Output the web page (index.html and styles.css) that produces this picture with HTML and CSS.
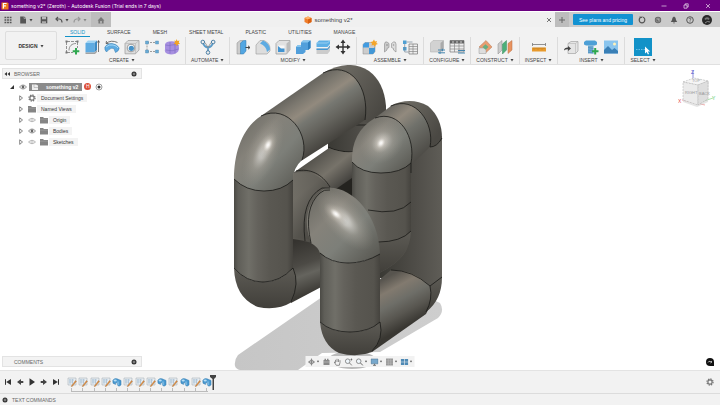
FILE: index.html
```html
<!DOCTYPE html>
<html lang="en">
<head>
    <meta charset="UTF-8">
    <meta name="viewport" content="width=device-width, initial-scale=1.0">
    <title>something v2* (Zeroth) - Autodesk Fusion</title>
    <link rel="stylesheet" href="styles.css">
</head>
<body>

    <!-- shared icons -->
    <svg class="sprite" aria-hidden="true">
        <symbol id="caret" viewBox="0 0 4 4"><path d="M0.5 1h3L2 3.4z" fill="#444"/></symbol>
        <symbol id="eye" viewBox="0 0 8 8"><path d="M0.5 4Q4 0 7.5 4Q4 8 0.5 4z" fill="#fff" stroke="#777" stroke-width="0.8"/><circle cx="4" cy="4" r="1.4" fill="#666"/></symbol>
        <symbol id="eye-off" viewBox="0 0 8 8"><path d="M0.5 4Q4 0.6 7.5 4Q4 7.4 0.5 4z" fill="#fff" stroke="#aaa" stroke-width="0.8"/><circle cx="4" cy="4" r="1.2" fill="none" stroke="#aaa" stroke-width="0.6"/></symbol>
        <symbol id="folder" viewBox="0 0 8 8"><path d="M0 1h3l1 1h4v5.5H0z" fill="#858585"/><path d="M0 3.2h8" stroke="#aaa" stroke-width="0.5"/></symbol>
        <symbol id="twist" viewBox="0 0 6 6"><path d="M1.7 0.8L4.5 3L1.7 5.4z" fill="#fff" stroke="#555" stroke-width="0.7"/></symbol>
        <symbol id="gear" viewBox="0 0 10 10"><circle cx="5" cy="5" r="3.8" fill="none" stroke="#777" stroke-width="1.6" stroke-dasharray="1.7 1.28"/><circle cx="5" cy="5" r="2.6" fill="none" stroke="#777" stroke-width="1.4"/></symbol>
        <symbol id="dot" viewBox="0 0 6 6"><circle cx="3" cy="3" r="2.5" fill="#333"/><path d="M1.7 3h2.6M3 1.7v2.6" stroke="#ddd" stroke-width="0.5"/></symbol>
        <symbol id="sketch" viewBox="0 0 10 10"><path d="M1 1h8v7H1z" fill="#e9edf1" stroke="#a9b2bb" stroke-width="0.6"/><path d="M2 3h5M2 5h4M3 2v5M5.500 2v5" stroke="#9cb9d0" stroke-width="0.6"/><path d="M4.500 8.700L8.500 3.500l1 0.800L5.500 9.300l-1.300 0.400z" fill="#e08a36" stroke="#8d6544" stroke-width="0.3"/></symbol>
        <symbol id="pipe" viewBox="0 0 10 10"><path d="M0.800 3.500Q2 1 5 1.800L9 3.500V8L7 9.200L5.300 8V6L3.500 5.600V7.400L1 6.200z" fill="#4b9bd2" stroke="#2b74ab" stroke-width="0.5"/><ellipse cx="3.200" cy="3.500" rx="1.600" ry="1" fill="#b7ddf4"/><path d="M6 4.500v3.500" stroke="#a5d3ef" stroke-width="0.9"/></symbol>
    </svg>

    <header class="titlebar">
        <svg class="app-icon" viewBox="0 0 8 8"><path d="M0.500 0.500h6l1 1v6h-7z" fill="#f07a1c"/><path d="M2.400 6.500v-5h3.200M2.400 3.800h2.500" stroke="#fff" stroke-width="1.200" fill="none"/></svg>
        <span class="title">something v2* (Zeroth) - Autodesk Fusion (Trial ends in 7 days)</span>
        <div class="window-buttons">
            <button aria-label="Minimize"><svg viewBox="0 0 6 6"><path d="M0.500 3h5"/></svg></button>
            <button aria-label="Restore"><svg viewBox="0 0 6 6"><path d="M1 2h3v3.200H1zM2.200 2V0.800h3v3.200H4"/></svg></button>
            <button aria-label="Close"><svg viewBox="0 0 6 6"><path d="M1 1l4 4M5 1L1 5"/></svg></button>
        </div>
    </header>

    <nav class="filebar">
        <div class="quick">
            <button aria-label="Data panel"><svg viewBox="0 0 8 8"><path d="M0.500 1.500h7M0.500 4h7M0.500 6.500h7" stroke="#555" stroke-width="1.700" stroke-dasharray="1.800 0.800"/></svg></button>
            <button aria-label="File" class="push"><svg viewBox="0 0 8 8"><path d="M1.200 0.500h4L7 2.300v5.200H1.200z" fill="#555"/><path d="M5 0.500v2h2" stroke="#ccc" stroke-width="0.500" fill="none"/></svg><svg class="caret"><use href="#caret"/></svg></button>
            <button aria-label="Save" class="push"><svg viewBox="0 0 8 8"><path d="M0.700 0.700h6.600v6.600H0.700z" fill="#555"/><path d="M2 0.700h4v2.500H2zM2 5h4v2.300H2z" fill="#bbb"/><path d="M2 5.800h4" stroke="#555" stroke-width="0.500"/></svg></button>
            <button aria-label="Undo" class="push"><svg viewBox="0 0 8 8"><path d="M3 1L1 3l2 2M1 3h3.500Q7 3.300 7 6.500" fill="none" stroke="#555" stroke-width="1.200"/></svg><svg class="caret"><use href="#caret"/></svg></button>
            <button aria-label="Redo"><svg viewBox="0 0 8 8"><path d="M5 1l2 2-2 2M7 3H3.500Q1 3.300 1 6.500" fill="none" stroke="#999" stroke-width="1.200"/></svg><svg class="caret faded"><use href="#caret"/></svg></button>
            <button aria-label="Home" class="home"><svg viewBox="0 0 8 8"><path d="M0.500 4.500L4 1l3.500 3.500H6.600V7.500H1.400V4.500z" fill="#777"/><path d="M3.200 7.500V5h1.600v2.500" fill="#bbb"/></svg></button>
        </div>
        <div class="doc-tab">
            <span class="doc-name"><svg viewBox="0 0 8 8"><path d="M0.500 2L4 0.500L7.500 2V6L4 7.700L0.500 6z" fill="#ef7d2a"/><path d="M0.500 2L4 0.500L7.500 2L4 3.500z" fill="#ffb46b"/><path d="M4 3.500L7.500 2V6L4 7.700z" fill="#d96010"/></svg>something v2*</span>
            <button aria-label="Close tab"><svg viewBox="0 0 6 6"><path d="M1 1l4 4M5 1L1 5" stroke="#555" stroke-width="0.800"/></svg></button>
        </div>
        <div class="account">
            <button class="new-tab" aria-label="New tab"><svg viewBox="0 0 8 8"><path d="M4 1v6M1 4h6" stroke="#666" stroke-width="1"/></svg></button>
            <button class="plans">See plans and pricing</button>
            <button aria-label="Extensions"><svg viewBox="0 0 8 8"><circle cx="4" cy="4" r="2.800" fill="none" stroke="#555" stroke-width="1.200"/><path d="M4 0.500L6 4L4.500 4.500" fill="none" stroke="#ccc" stroke-width="0.700"/><path d="M1.500 1l2 0.500" stroke="#555"/></svg></button>
            <button aria-label="Job status"><svg viewBox="0 0 8 8"><circle cx="4" cy="4" r="3.200" fill="#666"/><circle cx="4" cy="4" r="2" fill="none" stroke="#aaa" stroke-width="0.500"/><path d="M4 2.300V4h1.500" stroke="#ddd" stroke-width="0.700" fill="none"/></svg></button>
            <button aria-label="Notifications"><svg viewBox="0 0 8 8"><path d="M4 0.500Q6 1 6 4L7.200 6H0.800L2 4Q2 1 4 0.500zM3 6.500h2L4 7.700z" fill="#555"/></svg></button>
            <button aria-label="Help"><svg viewBox="0 0 8 8"><circle cx="4" cy="4" r="3.300" fill="none" stroke="#555" stroke-width="1"/><path d="M2.900 3.100Q3 2 4 2T5.100 3Q5 3.600 4 4.200V4.800M4 5.400v0.800" fill="none" stroke="#555" stroke-width="0.800"/></svg></button>
            <button aria-label="Profile" class="avatar"><svg viewBox="0 0 10 10"><circle cx="5" cy="5" r="5" fill="#292929"/><path d="M2.500 3.500Q5 1 7.500 3.200L7 5Q5 3.500 3 5z" fill="#777"/><path d="M3 8Q5 5.500 8 7" stroke="#888" fill="none"/></svg></button>
        </div>
    </nav>

    <section class="ribbon">
        <button class="workspace">DESIGN <svg class="caret"><use href="#caret"/></svg></button>
        <div class="tools">
            <div class="tabs">
                <button class="active">SOLID</button>
                <button>SURFACE</button>
                <button>MESH</button>
                <button>SHEET METAL</button>
                <button>PLASTIC</button>
                <button>UTILITIES</button>
                <button>MANAGE</button>
            </div>
            <div class="groups">
                <div class="group">
                    <div class="icons">
                        <button aria-label="Create sketch"><svg viewBox="0 0 16 16"><path d="M3 2.500h10M2.500 3v10M3 13.500h6M13.500 3v6" fill="none" stroke="#777" stroke-width="0.800" stroke-dasharray="3 1"/><path d="M5 11.500C5 7 8 4.500 12 4.500" fill="none" stroke="#777" stroke-width="0.800"/><path d="M1.500 1.500h2v2h-2zM12.500 1.500h2v2h-2zM1.500 12.500h2v2h-2z" fill="#777"/><path d="M12 9v6.500M8.700 12.200h6.600" stroke="#2fa84f" stroke-width="2"/></svg></button>
                        <button aria-label="Extrude"><svg viewBox="0 0 16 16"><path d="M1.500 4L4 1.500h9L10.500 4z" fill="#9fd3f3"/><path d="M1.500 4h9v9.500h-9z" fill="#5dabe2"/><path d="M10.500 4L13 1.500V11l-2.500 2.500z" fill="#3a8bc6"/><path d="M1.500 13.500h9L13 11v2l-2 2H1.500z" fill="#a3a3a3"/><path d="M14.500 13V2M13.500 3.500l1-2 1 2" stroke="#444" stroke-width="0.700" fill="none"/></svg></button>
                        <button aria-label="Revolve"><svg viewBox="0 0 16 16"><path d="M0.800 8.500Q3 4 8 4.500T15.200 9Q15 12 11.500 13.500L9.800 9.500Q7.500 8.500 5 10.500L2.500 13Q0.500 11 0.800 8.500z" fill="#5dabe2" stroke="#3077aa" stroke-width="0.500"/><path d="M2 8Q5 5.200 9 6T14 9" stroke="#a8d8f4" fill="none"/><path d="M2 4.500Q7 0.500 13.500 3.500M2 4.500l0.500-2.500M2 4.500h2.500" stroke="#555" stroke-width="0.800" fill="none"/></svg></button>
                        <button aria-label="Hole"><svg viewBox="0 0 16 16"><path d="M1 4.500L4 1.500h11V11l-3.500 3.800H1z" fill="#ddd" stroke="#999" stroke-width="0.700"/><path d="M1 4.500h10.500v10.300M11.500 4.500L15 1.500" fill="none" stroke="#aaa" stroke-width="0.500"/><circle cx="7" cy="9" r="3.800" fill="#fff" stroke="#777" stroke-width="0.700"/><circle cx="7.300" cy="9.300" r="2.600" fill="#4591c7"/></svg></button>
                        <button aria-label="Pattern"><svg viewBox="0 0 16 16"><path d="M3 3.500h10M3 3.500v9h10" stroke="#777" stroke-width="0.700" stroke-dasharray="2 1" fill="none"/><path d="M1.500 2h3v3h-3zM11.500 2h3v3h-3zM1.500 11h3v3h-3zM11.500 11h3v3h-3z" fill="#69acd7" stroke="#4e85aa" stroke-width="0.400"/></svg></button>
                        <button aria-label="Create form"><svg viewBox="0 0 16 16"><path d="M1 6Q1 3 5 2.500T12 3Q15 5 15 9T11.500 14.500T4 15T1 10z" fill="#a68fe0"/><path d="M1.500 6Q5 7 8 6T14.500 6.500M2 11Q8 13 14.500 10M6 3V14.500M11 4V14.500" stroke="#7c69c0" stroke-width="0.600" fill="none"/><path d="M12.500 0l1 2 2-0.500-0.800 2 1.300 1.500-2.200 0.300-1 2-1-2-2.200-0.300 1.500-1.500L10.300 1.500l1.700 0.500z" fill="#f2a323"/></svg></button>
                    </div>
                    <button class="label">CREATE <svg class="caret"><use href="#caret"/></svg></button>
                </div>
                <div class="group">
                    <div class="icons">
                        <button aria-label="Automate"><svg viewBox="0 0 16 16"><path d="M3 3.500Q4 8 8 8.500Q12 8 13 3.500M8 8.500v5" fill="none" stroke="#5c9cc8" stroke-width="1.800"/><path d="M5 3.500l3 5 3-5" stroke="#888" stroke-width="0.800" fill="none"/><circle cx="2.800" cy="3" r="1.800" fill="#eee" stroke="#4c7fa4"/><circle cx="13.200" cy="3" r="1.800" fill="#eee" stroke="#4c7fa4"/><circle cx="8" cy="13.500" r="1.800" fill="#eee" stroke="#4c7fa4"/></svg></button>
                    </div>
                    <button class="label">AUTOMATE <svg class="caret"><use href="#caret"/></svg></button>
                </div>
                <div class="group">
                    <div class="icons">
                        <button aria-label="Press pull"><svg viewBox="0 0 16 16"><path d="M2 4l3-2.500h3v11L5.500 15H2z" fill="#ccc" stroke="#888" stroke-width="0.500"/><path d="M5.500 4L8.500 1.500H11V12l-2.500 3h-3z" fill="#52a6e2" stroke="#2d77ac" stroke-width="0.500"/><path d="M10.500 8.500h4M13 6.800l2 1.700-2 1.700" stroke="#333" stroke-width="0.900" fill="none"/></svg></button>
                        <button aria-label="Fillet"><svg viewBox="0 0 16 16"><path d="M1 15V6L5 1.500h4Q15 4 15 10v2L12 15z" fill="#ddd" stroke="#999" stroke-width="0.600"/><path d="M5 4.500L8 1.500Q14.500 4 15 10.500L12 13Q11.500 7 5 4.500z" fill="#5dabe2"/></svg></button>
                        <button aria-label="Shell"><svg viewBox="0 0 16 16"><path d="M1 4.500L4 1.500h11V11l-3.500 4H1z" fill="#e1e1e1" stroke="#999" stroke-width="0.700"/><path d="M11.500 4.500L15 1.500V11l-3.500 4z" fill="#bbb"/><path d="M3 6.500h6.500v6.500H3z" fill="#f7f7f7"/><path d="M3 13V7l3 2.500h3.500V13z" fill="#4394d1"/></svg></button>
                        <button aria-label="Combine"><svg viewBox="0 0 16 16"><path d="M6 3.500L8 1.500h7.500v7.500L13 11h-2.500v2L8 15H1V8L3 6h3z" fill="#519fdb"/><path d="M6 3.500L8 1.500h7.500L13 3.500zM1 8l2-2h3v2z" fill="#86c5ee"/><path d="M13 3.500l2.500-2v7.500L13 11z" fill="#2f7fbd"/></svg></button>
                        <button aria-label="Split"><svg viewBox="0 0 16 16"><path d="M1.500 4L4 1.500h11V5l-2.500 3h-11z" fill="#5eb0e6"/><path d="M1.500 4h11L15 1.500" stroke="#b5def6" stroke-width="0.700" fill="none"/><path d="M1.500 9.500h11l2.500-3v5.500L12.500 15h-11z" fill="#ccc"/><path d="M1.500 9.500h11l2.500-3v1.500l-2.500 3h-11z" fill="#4695cf"/></svg></button>
                        <button aria-label="Move"><svg viewBox="0 0 16 16"><path d="M8 2v12M2 8h12" stroke="#333" stroke-width="1.400"/><path d="M8 0.500l2.500 3.500h-5zM8 15.500L5.500 12h5zM0.500 8L4 5.500v5zM15.500 8L12 10.500v-5z" fill="#333"/></svg></button>
                    </div>
                    <button class="label">MODIFY <svg class="caret"><use href="#caret"/></svg></button>
                </div>
                <div class="group">
                    <div class="icons">
                        <button aria-label="New component"><svg viewBox="0 0 16 16"><path d="M1 5.500L3 3.500h10v9L11 15H1z" fill="#ccc" stroke="#888" stroke-width="0.500"/><path d="M1 5.500L3 3.500h4v5H1z" fill="#429be0"/><path d="M7 9h5l1-1v4.500L11 15H7z" fill="#4297d6"/><path d="M12 0.500l1 2 2-0.500-0.700 2L16 5l-2.200 0.800L13 8l-1.500-2-2 0.500L10 4.500 8.500 3l2.200-0.500z" fill="#f4a52a"/></svg></button>
                        <button aria-label="Joint"><svg viewBox="0 0 16 16"><path d="M2.500 13V5Q3 2 5 3L7 4.500v4L5 9.500V11z" fill="#ccc" stroke="#888" stroke-width="0.600"/><path d="M14 13V5Q13.500 2 11.500 3L9.500 4.500v4l2 1V11z" fill="#ddd" stroke="#888" stroke-width="0.600"/><circle cx="5" cy="6" r="0.800" fill="#888"/><circle cx="11.500" cy="6" r="0.800" fill="#999"/></svg></button>
                        <button aria-label="Bill of materials"><svg viewBox="0 0 16 16"><path d="M1 1.500h3.500v3.500H1zM1 8h3.500v3.500H1z" fill="#4f9fd2"/><path d="M2.700 5v8h4M4.500 3h6" stroke="#789" stroke-width="0.700" fill="none"/><path d="M7 5h8.500v10H7z" fill="#eee" stroke="#777" stroke-width="0.700"/><path d="M7 7.500h8.500M7 10h8.500M7 12.500h8.500M11 5v10" stroke="#888" stroke-width="0.700"/></svg></button>
                    </div>
                    <button class="label">ASSEMBLE <svg class="caret"><use href="#caret"/></svg></button>
                </div>
                <div class="group">
                    <div class="icons">
                        <button aria-label="Configure"><svg viewBox="0 0 16 16"><path d="M1.500 4L4 1.500h10.500V10L11.500 13h-10z" fill="#d2d2d2" stroke="#aaa" stroke-width="0.500"/><path d="M11.500 4l3-2.500V10L11.500 13z" fill="#aaa"/><path d="M9 11h7M9 13.800h7" stroke="#4585ad" stroke-width="1"/><path d="M13 9.800h1v2.400h-1zM10.500 12.600h1V15h-1z" fill="#4585ad"/></svg></button>
                        <button aria-label="Configuration table"><svg viewBox="0 0 16 16"><path d="M1 1.500h14V13H1z" fill="#eee" stroke="#777" stroke-width="0.700"/><path d="M1 1.500h14v3H1z" fill="#666"/><path d="M3 3h2M7 3h2M11 3h2" stroke="#ccc"/><path d="M1 7h14M1 10h14M5.500 4v9M10 4v9" stroke="#888" stroke-width="0.700"/><path d="M9 11.500h7M9 14h7" stroke="#4585ad" stroke-width="1.100"/></svg></button>
                    </div>
                    <button class="label">CONFIGURE <svg class="caret"><use href="#caret"/></svg></button>
                </div>
                <div class="group">
                    <div class="icons">
                        <button aria-label="Offset plane"><svg viewBox="0 0 16 16"><path d="M2 8l7-6.500L15 8l-6 5.500z" fill="#e99d70" stroke="#b77955" stroke-width="0.500"/><path d="M2 9h7v5.500H2z" fill="#ddd" stroke="#999" stroke-width="0.500"/><path d="M8.500 5.200l3 2.800-3 2.800L5.500 8z" fill="#68ae80"/></svg></button>
                        <button aria-label="Midplane"><svg viewBox="0 0 16 16"><path d="M1 5l4-3.500V11l-4 4z" fill="#ccc" stroke="#888" stroke-width="0.500"/><path d="M5.500 5l4-3.500V11l-4 4z" fill="#4caf79" stroke="#398a5d" stroke-width="0.500"/><path d="M11 4.500l4-3V11l-4 3.500z" fill="#e9935f" stroke="#b46c43" stroke-width="0.500"/></svg></button>
                    </div>
                    <button class="label">CONSTRUCT <svg class="caret"><use href="#caret"/></svg></button>
                </div>
                <div class="group">
                    <div class="icons">
                        <button aria-label="Measure"><svg viewBox="0 0 16 16"><path d="M1.500 5.500h13M1.500 4v3M14.500 4v3" stroke="#777" stroke-width="0.800"/><path d="M1 8.500h14V12.500H1z" fill="#e89a2d"/><path d="M3 8.500v2M5 8.500v1.500M7 8.500v2M9 8.500v1.500M11 8.500v2M13 8.500v1.500" stroke="#9c6114" stroke-width="0.500"/></svg></button>
                    </div>
                    <button class="label">INSPECT <svg class="caret"><use href="#caret"/></svg></button>
                </div>
                <div class="group">
                    <div class="icons">
                        <button aria-label="Insert derive"><svg viewBox="0 0 16 16"><path d="M5 4.500l3-2h7V12l-2.500 2.500H5z" fill="#e5e5e5" stroke="#999" stroke-width="0.600"/><path d="M5 4.500h7.500v10M12.500 4.500l2.500-2" stroke="#aaa" stroke-width="0.500" fill="none"/><path d="M1 11.500Q1 8.500 5 8.500V7l3 2.500-3 2.500v-1.700Q3 10 1 11.500z" fill="#444"/></svg></button>
                        <button aria-label="Insert fastener"><svg viewBox="0 0 16 16"><path d="M1 3l2-1.500h9L14 3v2.500L12 6.500H3L1 5.500z" fill="#4d9fd6"/><path d="M5 6.500h5.500v8H5z" fill="#6aa9d2"/><path d="M5 8.500l5.500 1M5 11l5.500 1M5 13.200l5.500 1" stroke="#447fae" stroke-width="0.500"/><path d="M12.200 9v6.500M9 12.200h6.500" stroke="#2fa84f" stroke-width="2"/></svg></button>
                        <button aria-label="Insert image"><svg viewBox="0 0 16 16"><path d="M1 1.500h14v13H1z" fill="#8ac5ee"/><path d="M1 11l4-4 4 4 2.500-2 3.500 3v2.500H1z" fill="#397fb6"/><circle cx="11.500" cy="5" r="1.500" fill="#fff2ba"/></svg></button>
                    </div>
                    <button class="label">INSERT <svg class="caret"><use href="#caret"/></svg></button>
                </div>
                <div class="group last">
                    <div class="icons">
                        <button aria-label="Select" class="select-tool"><svg viewBox="0 0 18 18"><path d="M2 11.500h9" stroke="#7cc8ec" stroke-width="0.800" stroke-dasharray="1.500 1"/><path d="M11 8.500v7l1.700-1.500 1.200 2.500 1.200-0.600-1.200-2.300h2.300z" fill="#fff"/></svg></button>
                    </div>
                    <button class="label">SELECT <svg class="caret"><use href="#caret"/></svg></button>
                </div>
            </div>
        </div>
    </section>

    <main class="viewport">
        <svg class="scene" viewBox="0 65 720 305" role="img" aria-label="Interlocked pipe model">
            <defs>
                <linearGradient id="vert"><stop offset="0" stop-color="#4b4a45"/><stop offset="0.070" stop-color="#5f5e58"/><stop offset="0.250" stop-color="#706f68"/><stop offset="0.400" stop-color="#64625c"/><stop offset="0.600" stop-color="#5a5852"/><stop offset="0.900" stop-color="#55534d"/><stop offset="1" stop-color="#45433e"/></linearGradient>
                <linearGradient id="back"><stop offset="0" stop-color="#3a3934"/><stop offset="0.600" stop-color="#504e49"/><stop offset="1" stop-color="#5f5d57"/></linearGradient>
                <linearGradient id="diagA" gradientUnits="userSpaceOnUse" x1="291" y1="94" x2="326" y2="145"><stop offset="0" stop-color="#66645e"/><stop offset="0.180" stop-color="#7d7970"/><stop offset="0.350" stop-color="#928a7e"/><stop offset="0.500" stop-color="#767771"/><stop offset="0.700" stop-color="#65645e"/><stop offset="1" stop-color="#45433e"/></linearGradient>
                <linearGradient id="diagB" gradientUnits="userSpaceOnUse" x1="384" y1="111" x2="422" y2="158"><stop offset="0" stop-color="#6b6963"/><stop offset="0.250" stop-color="#928a7e"/><stop offset="0.500" stop-color="#70716b"/><stop offset="1" stop-color="#4b4944"/></linearGradient>
                <linearGradient id="diagC" gradientUnits="userSpaceOnUse" x1="391" y1="275" x2="416" y2="321"><stop offset="0" stop-color="#57544e"/><stop offset="0.250" stop-color="#827a6f"/><stop offset="0.500" stop-color="#6e6e68"/><stop offset="0.750" stop-color="#585650"/><stop offset="1" stop-color="#393732"/></linearGradient>
                <linearGradient id="diagD" gradientUnits="userSpaceOnUse" x1="313" y1="158" x2="345" y2="197"><stop offset="0" stop-color="#55534d"/><stop offset="0.400" stop-color="#77736a"/><stop offset="0.700" stop-color="#504e49"/><stop offset="1" stop-color="#282723"/></linearGradient>
                <linearGradient id="diagE" gradientUnits="userSpaceOnUse" x1="294" y1="242" x2="312" y2="292"><stop offset="0" stop-color="#35332f"/><stop offset="0.450" stop-color="#4c4a45"/><stop offset="0.650" stop-color="#65645e"/><stop offset="1" stop-color="#3d3b36"/></linearGradient>
                <linearGradient id="foot" x2="0" y2="1"><stop offset="0" stop-color="#5d5b55"/><stop offset="1" stop-color="#413f3a"/></linearGradient>
                <linearGradient id="elbow" x2="1" y2="1"><stop offset="0" stop-color="#65645e"/><stop offset="0.350" stop-color="#85827a"/><stop offset="0.600" stop-color="#7d7f79"/><stop offset="1" stop-color="#53524c"/></linearGradient>
                <linearGradient id="cap" x2="1" y2="0.600"><stop offset="0" stop-color="#77746c"/><stop offset="1" stop-color="#4a4843"/></linearGradient>
                <linearGradient id="shade" x2="1" y2="0"><stop offset="0" stop-color="#c6c6c6"/><stop offset="1" stop-color="#cecece"/></linearGradient>
                <radialGradient id="shine"><stop offset="0" stop-color="#fff"/><stop offset="0.200" stop-color="#efece7" stop-opacity="0.900"/><stop offset="0.500" stop-color="#c0bab0" stop-opacity="0.500"/><stop offset="1" stop-color="#a19d92" stop-opacity="0"/></radialGradient>
            </defs>

            <!-- ground shadow -->
            <path d="M238 355Q234 360 235 366Q236 369 240 370H298L322 353L380 352L438 318Q445 311 440 303L425 296L322 297z" fill="url(#shade)"/>
            <ellipse cx="352" cy="360" rx="24" ry="9" fill="#bbb"/>

            <!-- far uprights -->
            <path d="M328 136L366 112L386 110V160H328z" fill="url(#back)"/>
            <path d="M328 147Q338 152 353 152M356 125H367" class="edge"/>
            <path d="M411 136H442V278L430 290L380 278V200z" fill="url(#back)"/>

            <!-- middle run -->
            <path d="M293 173L329 148Q340 153 353 152V212L330 240L293 240z" fill="url(#diagD)"/>
            <path d="M336 189L352 178V206z" fill="#24231f"/>

            <!-- left loop, lower run -->
            <path d="M290 238L325 240V285L291 303z" fill="url(#diagE)"/>

            <!-- left loop -->
            <path d="M323 73Q349 58 369 71Q384 82 386 106L386 126L364 122z" fill="url(#cap)"/>
            <path d="M261 116L323 73C350 60 370 87 365 120L301 161z" fill="url(#diagA)"/>
            <path d="M323 73C350 60 370 87 365 120" class="edge"/>
            <path d="M234 176H293V268Q281 282 263 282T234 268z" fill="url(#vert)"/>
            <path d="M234 268Q246 282 263 282T293 268Q300 282 292 302Q277 311 258 307Q235 298 234 268z" fill="url(#foot)"/>
            <path d="M234 179C234 153 242 128 261 116C288 103 311 135 302 160Q293 168 293 180Q282 191 264 191Q246 191 234 179z" fill="url(#elbow)"/>
            <ellipse cx="263" cy="152" rx="16" ry="38" transform="rotate(24 263 152)" fill="url(#shine)" opacity="0.600"/>
            <ellipse cx="268" cy="145" rx="8" ry="14" transform="rotate(24 268 145)" fill="url(#shine)"/>
            <path d="M261 116C288 103 311 135 302 160" class="edge"/>
            <path d="M234 179Q246 191 264 191T293 180M234 268Q246 282 263 282T293 268Q300 283 291 302" class="edge"/>

            <!-- right loop -->
            <path d="M390 106Q410 96 428 106Q442 118 442 138Q437 147 430 147z" fill="url(#cap)"/>
            <path d="M375 118L391 106C415 95 435 123 430 147L411 165z" fill="url(#diagB)"/>
            <path d="M391 106C415 95 435 123 430 147Q437 147 442 138" class="edge"/>
            <path d="M352 160H411V232Q411 258 379 273L352 240z" fill="url(#vert)"/>
            <path d="M378 242Q401 242 411 231Q411 258 379 273z" fill="url(#foot)"/>
            <path d="M352 162Q351 132 375 118C400 109 416 138 411 163Q401 173 381 173Q361 173 352 162z" fill="url(#elbow)"/>
            <ellipse cx="382" cy="142" rx="20" ry="24" transform="rotate(45 382 142)" fill="url(#shine)" opacity="0.600"/>
            <ellipse cx="381" cy="143" rx="8" ry="11" transform="rotate(30 381 143)" fill="url(#shine)"/>
            <path d="M375 118C400 109 416 138 411 163V173M352 162Q361 173 381 173T411 163M368 210Q398 216 411 202M378 242Q401 242 411 231" class="edge"/>

            <!-- right loop, lower run -->
            <path d="M378 281L391 270Q412 269 430 286Q435 299 426 314L372 352z" fill="url(#diagC)"/>
            <path d="M430 286L442 277Q442 300 426 312Q433 299 430 286z" fill="url(#foot)"/>
            <path d="M391 270Q412 270 430 286L442 277M430 286Q433 299 426 312" class="edge"/>

            <!-- front elbow -->
            <path d="M293 173Q316 168 330 188L312 243Q302 240 293 239z" fill="url(#cap)" opacity="0.800"/>
            <path d="M311 243Q298 208 325 188C350 184 379 213 380 254Q365 263 348 263Q331 263 320 253Q318 247 311 243z" fill="url(#elbow)"/>
            <ellipse cx="345" cy="220" rx="18" ry="38" transform="rotate(-42 345 220)" fill="url(#shine)" opacity="0.650"/>
            <ellipse cx="336" cy="214" rx="8" ry="15" transform="rotate(-50 336 214)" fill="url(#shine)"/>
            <path d="M296 171C310 168 322 174 330 187" class="edge"/>
            <path d="M305 241Q300 200 322 188L330 188M311 243Q303 208 320 193Q324 189 330 190" class="edge"/>
            <path d="M320 253Q331 263 348 263T380 254V322Q369 332 350 332T320 322z" fill="url(#vert)"/>
            <path d="M320 322Q331 332 350 332T380 322Q384 339 372 352Q357 358 339 353Q322 345 320 322z" fill="url(#foot)"/>
            <path d="M320 253Q331 263 348 263T380 254M320 322Q331 332 350 332T380 322Q384 339 372 351" class="edge"/>
        </svg>

        <aside class="browser">
            <div class="panel-head"><svg class="tiny" viewBox="0 0 6 6"><path d="M3 1v4L0.500 3zM6 1v4L3.500 3z" fill="#333"/></svg><span>BROWSER</span><button aria-label="Browser options"><svg class="tiny"><use href="#dot"/></svg></button></div>
            <ul class="tree">
                <li class="root"><svg class="twist" viewBox="0 0 6 6"><path d="M5 1v4H1z" fill="#333"/></svg><svg><use href="#eye"/></svg><span class="selected"><svg viewBox="0 0 8 8"><path d="M1 1.500h4l2 1V7H1z" fill="#eee"/><path d="M3 1.500v3h4" stroke="#999" stroke-width="0.500" fill="none"/></svg>something v2</span><span class="badge">H</span><svg class="radio" viewBox="0 0 8 8"><circle cx="4" cy="4" r="3" fill="#fff" stroke="#777" stroke-width="0.700"/><circle cx="4" cy="4" r="1.500" fill="#333"/></svg></li>
                <li><svg class="twist"><use href="#twist"/></svg><svg><use href="#gear"/></svg><span class="name">Document Settings</span></li>
                <li><svg class="twist"><use href="#twist"/></svg><svg><use href="#folder"/></svg><span class="name">Named Views</span></li>
                <li><svg class="twist"><use href="#twist"/></svg><svg><use href="#eye-off"/></svg><svg><use href="#folder"/></svg><span class="name">Origin</span></li>
                <li><svg class="twist"><use href="#twist"/></svg><svg><use href="#eye"/></svg><svg><use href="#folder"/></svg><span class="name">Bodies</span></li>
                <li><svg class="twist"><use href="#twist"/></svg><svg><use href="#eye-off"/></svg><svg><use href="#folder"/></svg><span class="name">Sketches</span></li>
            </ul>
        </aside>

        <svg class="view-cube" viewBox="0 0 40 42">
            <path d="M15 16V3" stroke="#77c" stroke-width="0.800"/>
            <path d="M27 37L4 32" stroke="#e99" stroke-width="0.800"/>
            <path d="M20 35L35 30" stroke="#9d9" stroke-width="0.800"/>
            <path d="M5 15L16 10L31 13L30 34L19 39L5 34z" fill="#ccc" opacity="0.500"/>
            <path d="M5 14L16 10L30 13L20 17z" fill="#f5f5f5" stroke="#aaa" stroke-width="0.500" stroke-dasharray="2 1"/>
            <path d="M5 14L20 17V37L5 32z" fill="#ebebeb" stroke="#aaa" stroke-width="0.500" stroke-dasharray="2 1"/>
            <path d="M20 17L30 13V31L20 37z" fill="#dedede" stroke="#aaa" stroke-width="0.500" stroke-dasharray="2 1"/>
            <text x="7" y="26" class="face">RIGHT</text>
            <text x="21" y="27" class="face">BACK</text>
            <text x="14" y="14" class="face">TOP</text>
            <text x="13" y="6" class="axis z">Z</text>
            <text x="0" y="35" class="axis x">X</text>
            <text x="34" y="32" class="axis y">Y</text>
        </svg>

        <div class="comments panel-head"><span>COMMENTS</span><button aria-label="Comment options"><svg class="tiny"><use href="#dot"/></svg></button></div>

        <div class="navbar">
            <button aria-label="Orbit"><svg viewBox="0 0 8 8"><path d="M4 0.500v7M0.500 4h7" stroke="#777" stroke-width="0.800"/><circle cx="4" cy="4" r="2" fill="none" stroke="#777" stroke-width="0.800"/></svg><svg class="caret"><use href="#caret"/></svg></button>
            <button aria-label="Look at"><svg viewBox="0 0 8 8"><path d="M1 2h6v5H1zM2 0.800h1.500V2H2zM4.500 0.800H6V2H4.500z" fill="#888"/><path d="M1 4h6" stroke="#ccc" stroke-width="0.600"/></svg></button>
            <button aria-label="Pan"><svg viewBox="0 0 8 8"><path d="M2 4.500V1.800M3.500 4V0.800M5 4V1.200M6.500 4.500V2.200M2 4.500L0.700 4L2.800 7.300H5.800L6.500 4.500" fill="none" stroke="#777" stroke-width="0.800"/></svg></button>
            <button aria-label="Zoom"><svg viewBox="0 0 8 8"><circle cx="3.200" cy="3.200" r="2.300" fill="#eef5fa" stroke="#777" stroke-width="0.800"/><path d="M5 5l2.500 2.500M6 1.500h2M7 0.500v2" stroke="#666" stroke-width="0.800"/></svg></button>
            <button aria-label="Fit"><svg viewBox="0 0 8 8"><circle cx="3.200" cy="3.200" r="2.300" fill="#eef5fa" stroke="#777" stroke-width="0.800"/><path d="M5 5l2.500 2.500" stroke="#666"/></svg><svg class="caret"><use href="#caret"/></svg></button>
            <button aria-label="Display settings"><svg viewBox="0 0 8 8"><path d="M0.500 1h7v4.800h-7z" fill="#78a8cc" stroke="#567a95" stroke-width="0.600"/><path d="M2.500 7.300h3M4 5.800v1.500" stroke="#777"/></svg><svg class="caret"><use href="#caret"/></svg></button>
            <button aria-label="Grid"><svg viewBox="0 0 8 8"><path d="M0.500 0.500h7v7h-7z" fill="#999"/><path d="M0.500 2.800h7M0.500 5.200h7M2.800 0.500v7M5.200 0.500v7" stroke="#c5c5c5" stroke-width="0.400"/></svg><svg class="caret"><use href="#caret"/></svg></button>
            <button aria-label="Viewports"><svg viewBox="0 0 8 8"><path d="M0.300 1h3.400v2.800H0.300zM4.300 1h3.400v2.800H4.300zM0.300 4.300h3.400v2.800H0.300zM4.300 4.300h3.400v2.800H4.300z" fill="#4f8ab5"/></svg><svg class="caret"><use href="#caret"/></svg></button>
        </div>

        <button class="assistant" aria-label="Assistant"><svg viewBox="0 0 8 8"><path d="M4 0Q8 0 8 4V8H4Q0 8 0 4T4 0z" fill="#111"/><path d="M2 4.500Q3 2.500 4 3.500T6 3M4.500 5L6 4" stroke="#fff" stroke-width="0.700" fill="none"/></svg></button>
    </main>

    <section class="timeline">
        <div class="playback">
            <button aria-label="Go to start"><svg viewBox="0 0 8 8"><path d="M1.500 1.200v5.600" stroke="#333"/><path d="M7 1v6L2.200 4z" fill="#333"/></svg></button>
            <button aria-label="Step back"><svg viewBox="0 0 8 8"><path d="M5 1v6L1 4zM5 3h2.300v2H5z" fill="#444"/></svg></button>
            <button aria-label="Play"><svg viewBox="0 0 8 8"><path d="M1.500 0.200v7.600L7 4z" fill="#333"/></svg></button>
            <button aria-label="Step forward"><svg viewBox="0 0 8 8"><path d="M3 1v6L7 4zM0.700 3H3v2H0.700z" fill="#444"/></svg></button>
            <button aria-label="Go to end"><svg viewBox="0 0 8 8"><path d="M6.500 1.200v5.600" stroke="#333"/><path d="M1 1v6L5.800 4z" fill="#333"/></svg></button>
        </div>
        <div class="history">
            <button aria-label="Sketch 1"><svg><use href="#sketch"/></svg></button>
            <button aria-label="Sketch 2"><svg><use href="#sketch"/></svg></button>
            <button aria-label="Sketch 3"><svg><use href="#sketch"/></svg></button>
            <button aria-label="Sketch 4"><svg><use href="#sketch"/></svg></button>
            <button aria-label="Pipe 1"><svg><use href="#pipe"/></svg></button>
            <button aria-label="Sketch 5"><svg><use href="#sketch"/></svg></button>
            <button aria-label="Sketch 6"><svg><use href="#sketch"/></svg></button>
            <button aria-label="Sketch 7"><svg><use href="#sketch"/></svg></button>
            <button aria-label="Pipe 2"><svg><use href="#pipe"/></svg></button>
            <button aria-label="Sketch 8"><svg><use href="#sketch"/></svg></button>
            <button aria-label="Pipe 3"><svg><use href="#pipe"/></svg></button>
            <button aria-label="Sketch 9"><svg><use href="#sketch"/></svg></button>
            <button aria-label="Pipe 4"><svg><use href="#pipe"/></svg></button>
        </div>
        <svg class="marker" viewBox="0 0 6 16"><path d="M0 1h6v2L4 5v11H2.500V5L0 3z" fill="#444"/></svg>
        <button class="settings" aria-label="Timeline settings"><svg><use href="#gear"/></svg></button>
    </section>

    <footer class="commands">
        <button aria-label="Expand text commands"><svg class="tiny"><use href="#dot"/></svg></button>
        <span>TEXT COMMANDS</span>
    </footer>

</body>
</html>
```

FILE: styles.css
```css
* {
    box-sizing: border-box;
}

body {
    font-family: "Liberation Sans", Arial, sans-serif;
    font-size: 5px;
    line-height: 8px;
    color: #444;
    background-color: #fff;
    margin: 0;
    height: 100vh;
    display: flex;
    flex-direction: column;
    overflow: hidden;
}

button {
    font: inherit;
    color: inherit;
    background: none;
    border: none;
    padding: 0;
    display: flex;
    align-items: center;
    justify-content: center;
    cursor: pointer;
}

svg {
    display: block;
    flex: none;
    width: 8px;
    height: 8px;
}

.sprite {
    position: absolute;
    width: 0;
    height: 0;
}

.caret {
    width: 4px;
    height: 4px;
    margin-left: 2px;
}

.faded {
    opacity: 0.5;
}

.tiny {
    width: 6px;
    height: 6px;
}

/* title bar */
.titlebar {
    display: flex;
    align-items: center;
    height: 11px;
    flex: none;
    padding: 0 9px 0 1px;
    background-color: #6a0080;
    color: #fff;
}

.title {
    font-family: Inter, sans-serif;
    margin-left: 2px;
}

.window-buttons {
    display: flex;
    gap: 16px;
    margin-left: auto;
}

.window-buttons svg {
    width: 6px;
    height: 6px;
    fill: none;
    stroke: #fff;
    stroke-width: 0.6;
}

/* file bar */
.filebar {
    display: flex;
    height: 15px;
    flex: none;
    margin-top: 1px;
    background-color: #f0f0f0;
}

.quick {
    display: flex;
    align-items: center;
    background-color: #cbcbcb;
    padding-left: 4px;
    gap: 4px;
}

.push {
    margin-left: 3px;
}

.home {
    align-self: stretch;
    width: 20px;
    background-color: #bdbdbd;
}

.doc-tab {
    flex: 1;
    display: flex;
    align-items: center;
    padding-right: 3px;
}

.doc-name {
    flex: 1;
    display: flex;
    justify-content: center;
    align-items: center;
    gap: 2px;
    font-size: 6px;
}

.doc-tab button svg {
    width: 6px;
    height: 6px;
}

.account {
    display: flex;
    align-items: center;
    gap: 8px;
    padding-right: 8px;
    background-color: #cbcbcb;
}

.new-tab {
    align-self: stretch;
    width: 14px;
    margin-right: -4px;
    background-color: #bdbdbd;
}

.plans {
    width: 60px;
    height: 11px;
    margin-right: -3px;
    border-radius: 1px;
    background-color: #1292d2;
    color: #fff;
}

.avatar svg {
    width: 10px;
    height: 10px;
}

/* ribbon */
.ribbon {
    display: flex;
    flex: none;
    height: 38px;
    padding-left: 5px;
    background-color: #f2f2f2;
    border-bottom: 1px solid #e0e0e0;
}

.workspace {
    width: 52px;
    height: 29px;
    margin-top: 4px;
    border: 1px solid #dedede;
    border-radius: 2px;
    font-weight: bold;
    color: #333;
}

.tabs {
    display: flex;
    gap: 12px;
    padding-left: 8px;
}

.tabs button {
    height: 10px;
    padding: 1px 5px 0;
    border-bottom: 1px solid transparent;
}

.tabs .active {
    color: #1292c8;
    border-bottom-color: #1292c8;
}

.groups {
    display: flex;
    padding-left: 2px;
}

.group {
    display: flex;
    flex-direction: column;
    align-items: center;
    padding: 0 5px;
    border-right: 1px solid #dcdcdc;
}

.group.last {
    border-right: none;
}

.icons {
    display: flex;
    align-items: center;
    gap: 4px;
    height: 19px;
}

.icons svg {
    width: 16px;
    height: 16px;
}

.select-tool {
    background-color: #1292c8;
}

.icons .select-tool svg {
    width: 18px;
    height: 18px;
}

/* canvas */
.viewport {
    position: relative;
    flex: 1;
    min-height: 0;
    background-color: #fff;
}

.scene {
    width: 100%;
    height: 100%;
}

.edge {
    fill: none;
    stroke: #191917;
    stroke-width: 0.8;
}

.browser {
    position: absolute;
    top: 3px;
    left: 2px;
    width: 140px;
}

.panel-head {
    display: flex;
    align-items: center;
    gap: 4px;
    height: 11px;
    padding: 0 4px 0 1px;
    background-color: #f3f3f3;
    border: 1px solid #e3e3e3;
    color: #666;
}

.panel-head button {
    margin-left: auto;
}

.comments {
    position: absolute;
    left: 2px;
    bottom: 3px;
    width: 140px;
    padding-left: 11px;
}

.tree {
    list-style: none;
    margin: 2px 0 0;
    padding: 0;
    color: #333;
}

.tree li {
    display: flex;
    align-items: center;
    gap: 4px;
    height: 11px;
    padding-left: 16px;
}

.tree .root {
    padding-left: 7px;
}

.twist {
    width: 6px;
    height: 6px;
}

.name {
    padding: 0 4px;
    margin-left: -3px;
    background-color: #f3f3f3;
}

.selected {
    display: flex;
    align-items: center;
    gap: 7px;
    padding: 0 4px 0 2px;
    margin-left: -2px;
    background-color: #8b8b8b;
    color: #fff;
    font-weight: bold;
}

.badge {
    width: 7px;
    height: 7px;
    margin-left: -2px;
    border-radius: 50%;
    background-color: #dc4e38;
    color: #fff;
    line-height: 7px;
    text-align: center;
}

.view-cube {
    position: absolute;
    top: 3px;
    right: 2px;
    width: 40px;
    height: 42px;
}

.face {
    font-size: 4px;
    fill: #999;
}

.axis {
    font-size: 5px;
}

.x {
    fill: #e34b4b;
}

.y {
    fill: #4fc46a;
}

.z {
    fill: #4d4dce;
}

.navbar {
    position: absolute;
    bottom: 3px;
    left: 50%;
    transform: translateX(-50%);
    display: flex;
    align-items: center;
    gap: 3px;
    height: 11px;
    padding: 0 2px;
    background-color: #f2f2f2;
}

.navbar .caret {
    width: 3px;
    height: 3px;
    margin-left: 1px;
}

.assistant {
    position: absolute;
    right: 6px;
    bottom: 4px;
}

/* timeline */
.timeline {
    display: flex;
    align-items: center;
    flex: none;
    height: 23px;
    padding: 0 6px 0 4px;
    background-color: #f2f2f2;
    border-top: 1px solid #e3e3e3;
}

.playback {
    display: flex;
    gap: 4px;
}

.history {
    display: flex;
    justify-content: space-between;
    width: 145px;
    margin-left: 7px;
}

.history svg {
    width: 10px;
    height: 10px;
}

.history button {
    position: relative;
}

.history button::after {
    content: "";
    position: absolute;
    top: 11px;
    left: 4px;
    width: 12px;
    height: 3px;
    border-left: 1px solid #bbb;
    border-bottom: 1px solid #bbb;
}

.history button:last-child::after {
    width: 1px;
    border-bottom: none;
}

.marker {
    width: 6px;
    height: 16px;
    margin-left: -2px;
}

.settings {
    margin-left: auto;
}

/* text commands */
.commands {
    display: flex;
    align-items: center;
    gap: 4px;
    flex: none;
    height: 12px;
    padding-left: 2px;
    background-color: #f2f2f2;
    border-top: 1px solid #dcdcdc;
    color: #666;
}
```
